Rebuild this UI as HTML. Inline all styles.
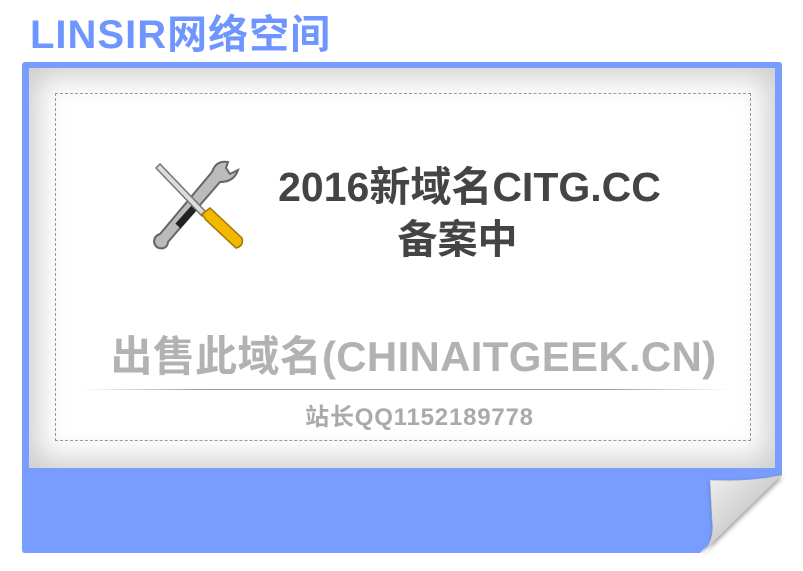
<!DOCTYPE html>
<html><head><meta charset="utf-8"><style>
body{margin:0;width:803px;height:571px;background:#fff;position:relative;overflow:hidden;font-family:"Liberation Sans","Noto Sans CJK SC",sans-serif;}
.t{position:absolute;left:30px;top:2px;font-size:40px;font-weight:bold;color:#6f95ff;letter-spacing:1px;}
.blue{position:absolute;left:22px;top:62px;width:760px;height:491px;background:#789dff;border-radius:3px;box-shadow:2px 3px 4px rgba(0,0,0,.35);clip-path:polygon(0 0,100% 0,100% 413px,678px 491px,0 491px);}
.inner{position:absolute;left:29px;top:68px;width:746px;height:400px;background:#fff;box-shadow:inset 0 0 30px 8px #ccc;}
.dash{position:absolute;left:55px;top:93px;width:694px;height:346px;border:1px dashed #999;}
.c{position:absolute;left:0;width:803px;text-align:center;font-weight:bold;white-space:nowrap;}
</style></head><body>
<div class="t">LINSIR网络空间</div>
<div class="blue"></div>
<svg style="position:absolute;left:690px;top:470px" width="100" height="90"><defs><linearGradient id="g" x1="0" y1="0" x2="1" y2="1"><stop offset="0" stop-color="#f4f4f4"/><stop offset=".6" stop-color="#c9c9c9"/><stop offset="1" stop-color="#eee"/></linearGradient></defs>
<path d="M92 5 L12 83 Q25 70 22 50 L20 10 Q60 12 92 5Z" fill="url(#g)" stroke="#aaa" stroke-width="0.5" style="filter:drop-shadow(1px 2px 2px rgba(0,0,0,.35))"/></svg>
<div class="inner"></div>
<div class="dash"></div>
<svg style="position:absolute;left:148px;top:156px" width="105" height="100" viewBox="0 0 105 100">
<path d="M80 6 Q68 4 64 16 L12 78 Q6 80 6 86 Q8 94 16 92 Q20 90 20 86 L72 26 Q86 26 90 14 L82 18 L78 12Z" fill="#bbb" stroke="#666" stroke-width="2"/>
<path d="M30 70 L46 52" stroke="#222" stroke-width="7"/>
<path d="M8 12 L12 8 L58 56 L54 60Z" fill="#ddd" stroke="#777" stroke-width="1.5"/>
<path d="M54 58 L62 52 L94 82 Q96 90 88 92 L58 64Z" fill="#f2b800" stroke="#a07800" stroke-width="1.5"/>
</svg>
<div class="c" style="top:153px;left:68px;font-size:41px;color:#444;">2016新域名CITG.CC</div>
<div class="c" style="top:207px;left:56px;font-size:40px;color:#444;">备案中</div>
<div class="c" style="top:323px;left:12px;font-size:42px;color:#b2b2b2;letter-spacing:0.3px;">出售此域名(CHINAITGEEK.CN)</div>
<div style="position:absolute;left:80px;top:389px;width:650px;height:1px;background:linear-gradient(90deg,transparent,#999 20%,#999 80%,transparent)"></div>
<div class="c" style="top:397px;left:18px;font-size:24px;color:#aaa;letter-spacing:0.8px;">站长QQ1152189778</div>
</body></html>
